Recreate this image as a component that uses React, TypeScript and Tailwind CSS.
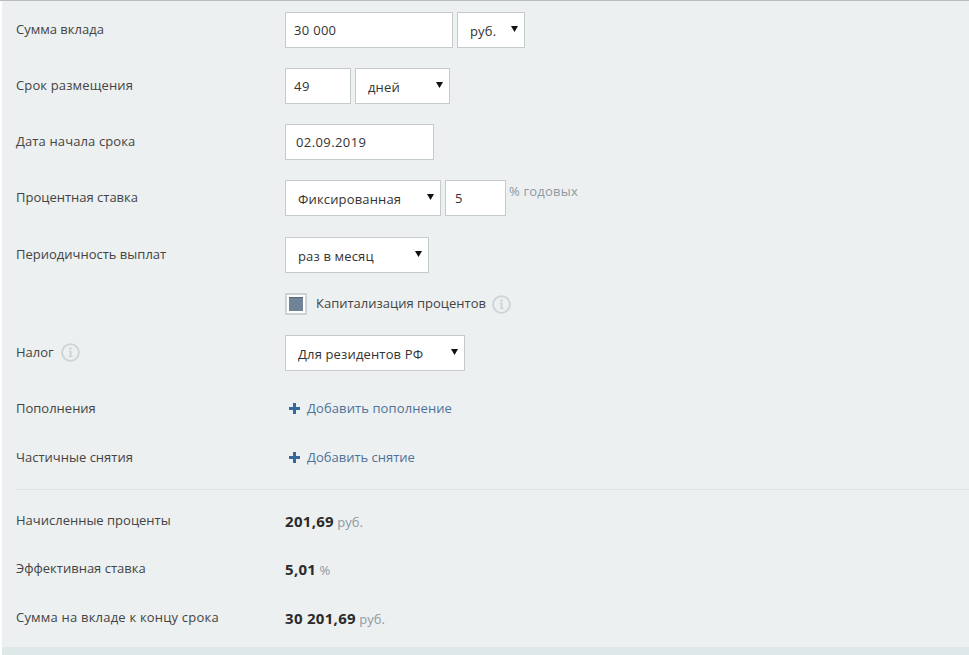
import type { ReactNode } from "react";

const field = "h-9 border border-[#c4cbcd] bg-white text-[13px] text-[#333] outline-none";

function Arrow() {
  return (
    <svg width="7" height="6" viewBox="0 0 7 6" className="pointer-events-none absolute top-[14px] right-[7px]">
      <path d="M0 0H7L3.5 6Z" fill="#111" />
    </svg>
  );
}

function Select({ value, width }: { value: string; width: string }) {
  return (
    <div className={`relative ${width}`}>
      <select defaultValue={value} className={`${field} w-full appearance-none rounded-none pt-[2px] pl-[12px] tracking-[0.15px]`}>
        <option>{value}</option>
      </select>
      <Arrow />
    </div>
  );
}

function Info({ className = "" }: { className?: string }) {
  return (
    <svg width="19" height="19" viewBox="0 0 19 19" className={className}>
      <circle cx="9.5" cy="9.5" r="8.4" fill="none" stroke="#cbd4d4" strokeWidth="1.8" />
      <path d="M8.3 4.6h2.3v2.1H8.3zM7.8 8h2.8v5h1v1.1H7.7V13h1V9.1h-.9z" fill="#cbd4d4" />
    </svg>
  );
}

function Plus() {
  return (
    <svg width="11" height="11" viewBox="0 0 11 11">
      <path d="M4 0h3v4h4v3H7v4H4V7H0V4h4z" fill="#34699c" />
    </svg>
  );
}

function Row({ label, height, children, className = "" }: { label: ReactNode; height: string; children?: ReactNode; className?: string }) {
  return (
    <div className={`flex items-center ${height} ${className}`}>
      <div className="flex w-[269px] shrink-0 items-center gap-[7px] pb-[2px] text-[#444]">{label}</div>
      <div className="flex items-center gap-[4px]">{children}</div>
    </div>
  );
}

function Result({ value, unit }: { value: string; unit: string }) {
  return (
    <span>
      <b className="text-[15px] font-bold tracking-[0.3px] text-[#2b2b2b]">{value}</b> <span className="text-[#8e9aa3]">{unit}</span>
    </span>
  );
}

export default function App() {
  return (
    <div className="h-[655px] w-[969px] overflow-hidden bg-white font-['Open_Sans',sans-serif] text-[13px] leading-[18px]">
      <div className="flex h-full flex-col border-t-[1px] border-[#b9bdbd] pl-[2px]">
        <div className="flex-1 bg-[#ecf0f1] pt-[11px] pl-[14px]">
          <Row label="Сумма вклада" height="h-9">
            <input defaultValue="30 000" className={`${field} w-[168px] pl-[8px] tracking-[0.3px]`} />
            <Select value="руб." width="w-[68px]" />
          </Row>
          <Row label={<span className="tracking-[0.13px]">Срок размещения</span>} height="h-9" className="mt-5">
            <input defaultValue="49" className={`${field} w-[66px] pl-[8px] tracking-[0.5px]`} />
            <Select value="дней" width="w-[95px]" />
          </Row>
          <Row label={<span className="tracking-[0.12px]">Дата начала срока</span>} height="h-9" className="mt-5">
            <input defaultValue="02.09.2019" className={`${field} w-[149px] pl-[10px] tracking-[0.4px]`} />
          </Row>
          <Row label="Процентная ставка" height="h-9" className="mt-5">
            <Select value="Фиксированная" width="w-[156px]" />
            <input defaultValue="5" className={`${field} w-[61px] pl-[9px]`} />
            <span className="mb-[14px] -ml-[1px] tracking-[0.2px] text-[#8e9aa3]">% годовых</span>
          </Row>
          <Row label="Периодичность выплат" height="h-9" className="mt-[21px]">
            <Select value="раз в месяц" width="w-[144px]" />
          </Row>
          <Row label="" height="h-[22px]" className="mt-5">
            <span className="flex h-[22px] w-[22px] items-center justify-center border-2 border-[#ccd3d6] bg-white">
              <span className="h-[14px] w-[14px] border-t border-[#55677a] bg-[#6f8496]" />
            </span>
            <span className="ml-[5px] pb-[2px] text-[#444]">Капитализация процентов</span>
            <Info className="ml-[2px]" />
          </Row>
          <Row label={<>Налог <Info /></>} height="h-9" className="mt-5">
            <Select value="Для резидентов РФ" width="w-[180px]" />
          </Row>
          <Row label="Пополнения" height="h-[18px]" className="mt-[29px]">
            <a className="ml-[4px] flex items-center gap-[7px] pb-[2px] tracking-[0.1px] text-[#4f7299]"><Plus />Добавить пополнение</a>
          </Row>
          <Row label="Частичные снятия" height="h-[18px]" className="mt-[31px]">
            <a className="ml-[4px] flex items-center gap-[7px] pb-[2px] text-[#4f7299]"><Plus />Добавить снятие</a>
          </Row>
          <div className="mt-[22px] h-px bg-[#e0e6e6]" />
          <Row label="Начисленные проценты" height="h-[18px]" className="mt-[22px]">
            <Result value="201,69" unit="руб." />
          </Row>
          <Row label="Эффективная ставка" height="h-[18px]" className="mt-[30px]">
            <Result value="5,01" unit="%" />
          </Row>
          <Row label={<span className="tracking-[0.2px]">Сумма на вкладе к концу срока</span>} height="h-[18px]" className="mt-[31px]">
            <Result value="30 201,69" unit="руб." />
          </Row>
        </div>
        <div className="h-2 bg-[#dfe8e8]" />
      </div>
    </div>
  );
}
